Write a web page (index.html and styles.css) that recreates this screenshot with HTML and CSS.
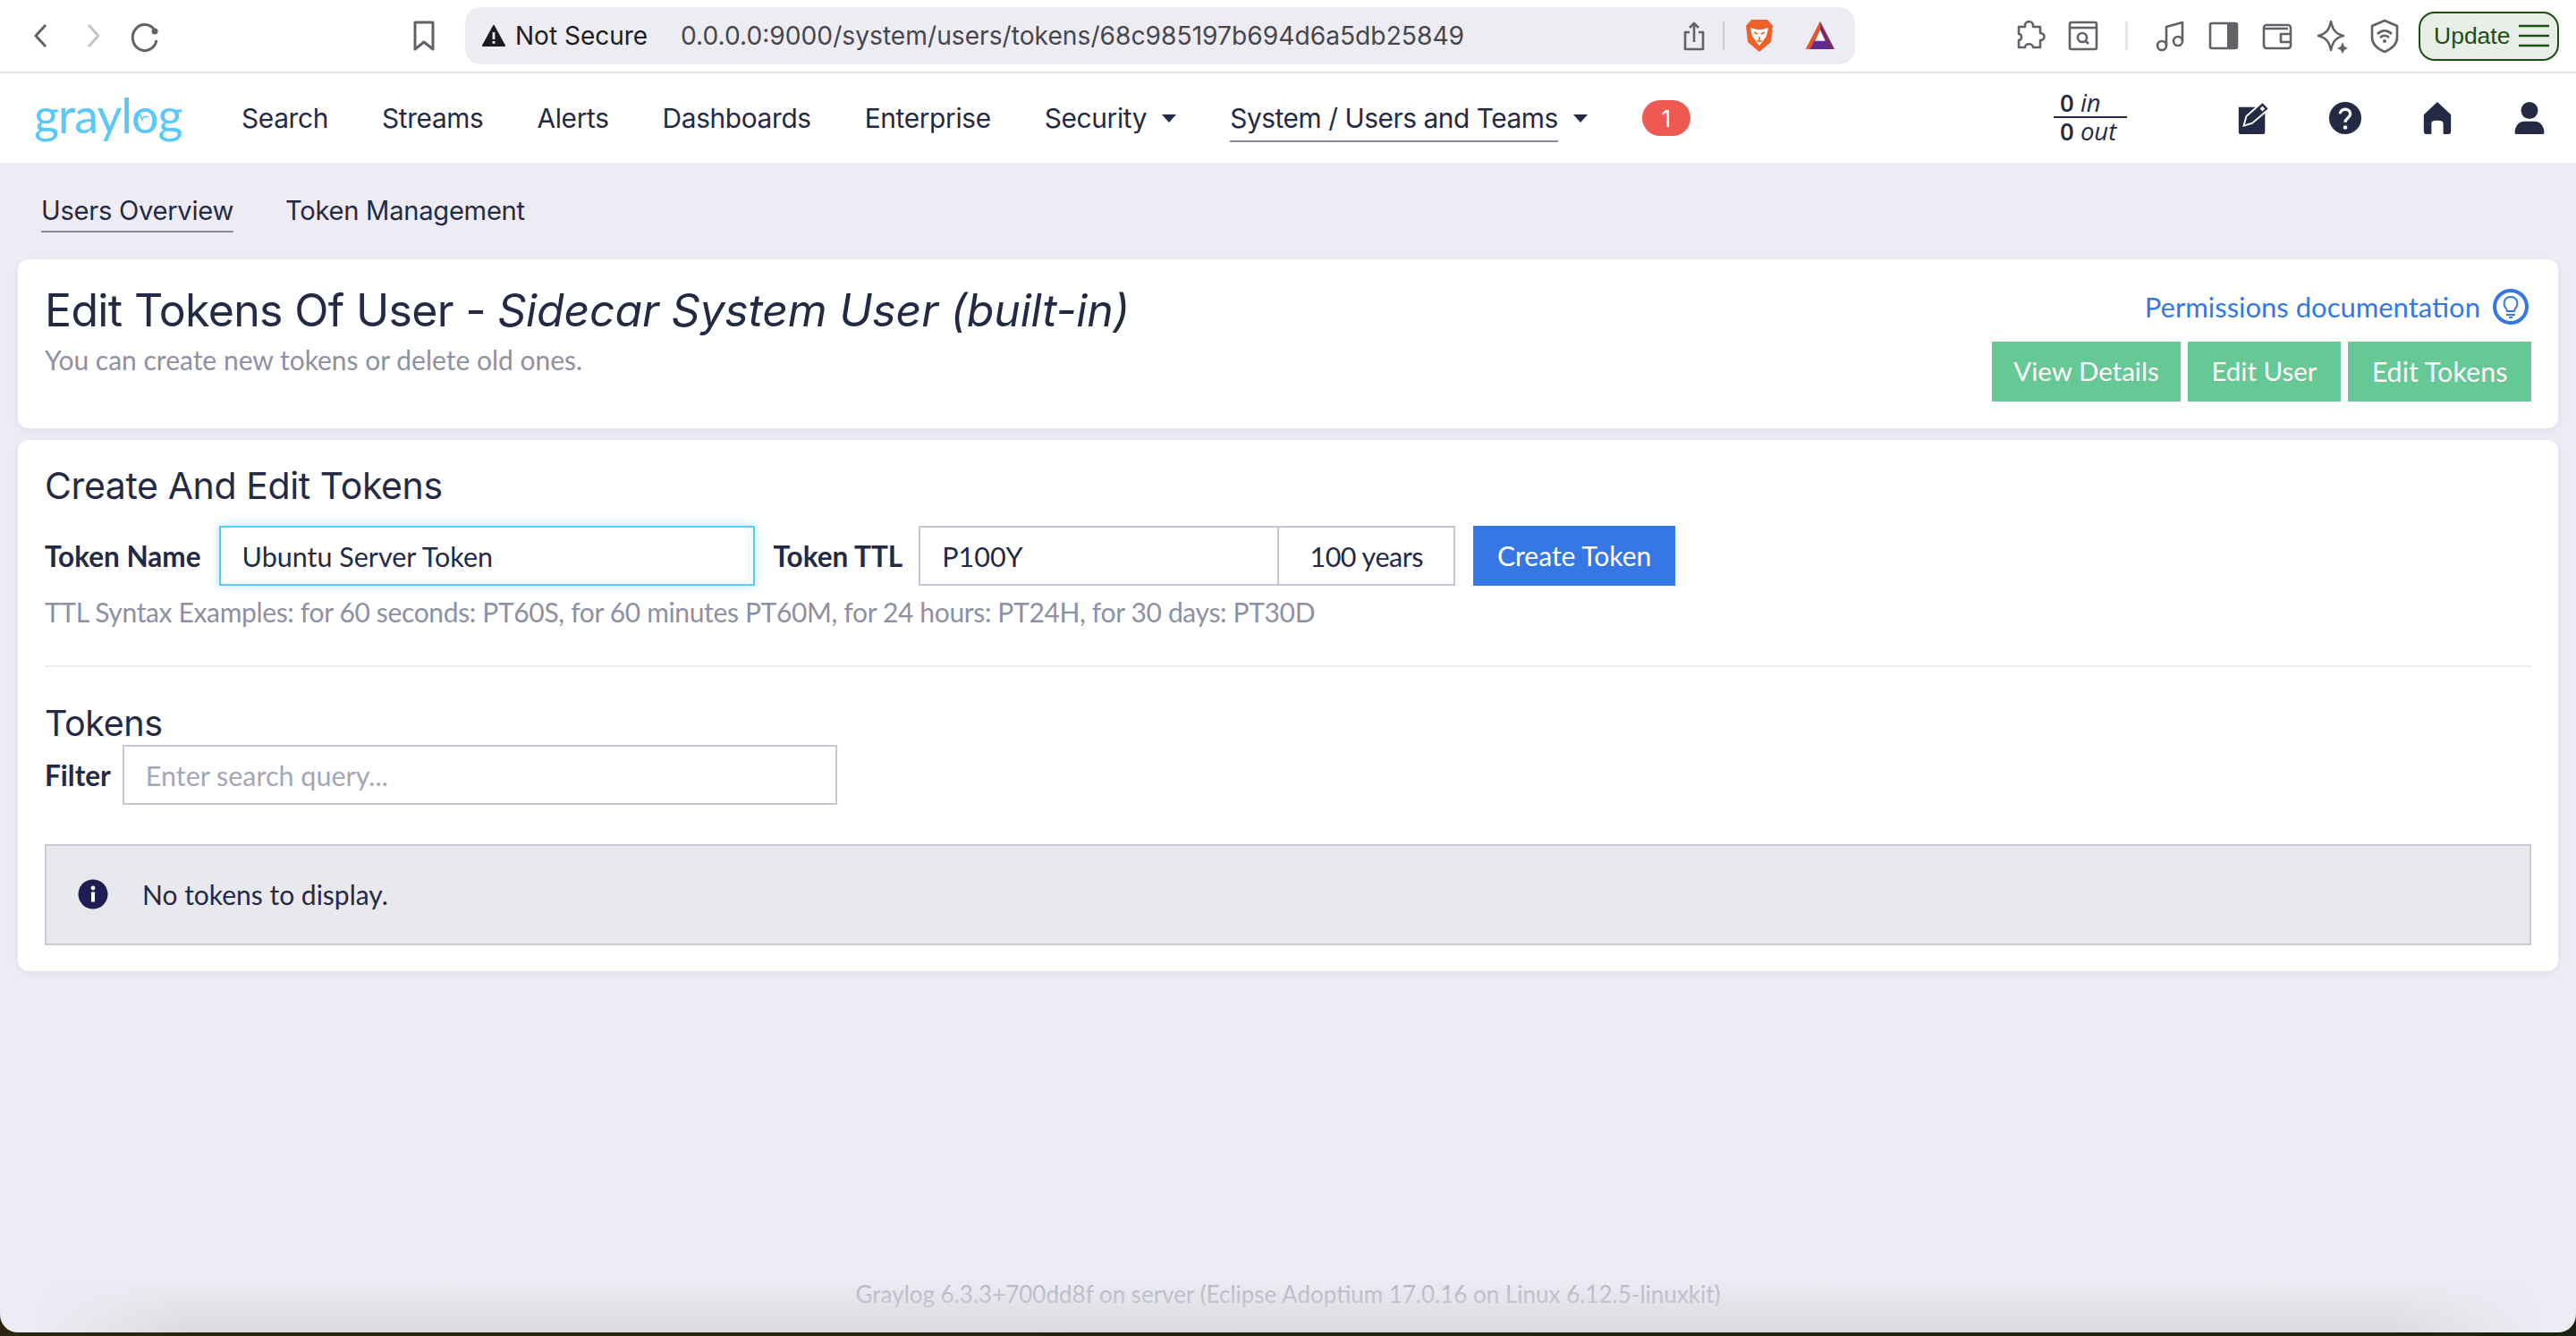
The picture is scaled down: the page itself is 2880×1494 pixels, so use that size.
FILE: index.html
```html
<html>

<head>
    <link rel="stylesheet" href="styles.css">
    <title>Graylog - Edit Tokens</title>
</head>

<body>
    <div class="window">
        <!-- browser toolbar -->
        <div class="toolbar">
            <svg class="tb-icon" viewBox="0 0 40 40"><path class="st" d="M28 8 L17 20 L28 32" transform="translate(-1 0)" /></svg>
            <svg class="tb-icon forward" viewBox="0 0 40 40"><path class="st light" d="M15 8 L26 20 L15 32" /></svg>
            <svg class="tb-icon reload" viewBox="0 0 40 40"><path class="st" d="M30 14 A13.5 14.5 0 1 0 32 25" /><circle cx="30" cy="15" r="3.5" fill="#5f6368" /></svg>
            <svg class="tb-icon bookmark" viewBox="0 0 40 40"><path class="st" d="M10 5 H30 V35 L20 27 L10 35 Z" /></svg>
            <div class="address">
                <svg class="warn" viewBox="0 0 26 26"><path d="M13 2 L25 24 H1 Z" fill="#1c1c20" stroke="#1c1c20" stroke-width="2" stroke-linejoin="round" /><rect x="11.6" y="9" width="2.8" height="8" fill="#edecf3" /><rect x="11.6" y="19" width="2.8" height="2.8" fill="#edecf3" /></svg>
                <span class="not-secure">Not Secure</span>
                <span class="url">0.0.0.0:9000/system/users/tokens/68c985197b694d6a5db25849</span>
                <svg class="share" viewBox="0 0 24 34"><path class="st thin" d="M7 13 H2 V32 H22 V13 H17 M12 24 V3 M7 8 L12 3 L17 8" /></svg>
                <span class="addr-div"></span>
                <svg class="brave" viewBox="0 0 32 38"><path d="M7 1 H25 L31 8 L29 26 L16 37 L3 26 L1 8 Z" fill="#f0602a" /><path d="M6 10 L13 12 H19 L26 10 L24 19 L20 25 L16 30 L12 25 L8 19 Z" fill="#fff" /><path d="M10 15 L14 17 M22 15 L18 17 M16 20 V25 M13 25 H19" stroke="#f0602a" stroke-width="1.6" fill="none" /></svg>
                <svg class="bat" viewBox="0 0 36 36"><path d="M18 1 L35 34 H1 Z" fill="#7d2a68" /><path d="M18 1 L1 34 H9 L18 12 Z" fill="#e9542c" /><path d="M11 24 H25 L30 34 H6 Z" fill="#5e2c8c" /><path d="M18 11 L24 24 H12 Z" fill="#fff" /></svg>
            </div>
            <svg class="tb-icon puzzle" viewBox="0 0 40 40"><path class="st thin" d="M15 8 C15 3 24 3 24 8 V10 H32 V17 C38 17 38 25 32 25 V33 H24 C24 28 15 28 15 33 H8 V25 C12 25 12 18 8 18 V10 H15 Z" /></svg>
            <svg class="tb-icon reader" viewBox="0 0 40 40"><rect class="st thin" x="5" y="5" width="30" height="30" rx="2" /><path class="st thin" d="M5 11 H35" /><circle class="st thin" cx="19" cy="22" r="5" /><path class="st thin" d="M23 26 L26 29" /></svg>
            <span class="tb-div"></span>
            <svg class="tb-icon music" viewBox="0 0 40 40"><circle class="st thin" cx="10" cy="31" r="5" /><circle class="st thin" cx="28" cy="26" r="5" /><path class="st thin" d="M15 31 V10 L33 5 V26" /></svg>
            <svg class="tb-icon sidebar" viewBox="0 0 40 40"><rect class="st thin" x="5" y="6" width="30" height="28" rx="2" /><rect x="24" y="6" width="11" height="28" fill="#5f6368" /></svg>
            <svg class="tb-icon wallet" viewBox="0 0 40 40"><rect class="st thin" x="5" y="8" width="30" height="26" rx="3" /><path class="st thin" d="M5 12 H32 M35 18 H24 V27 H35" /></svg>
            <svg class="tb-icon star" viewBox="0 0 40 40"><path class="st thin" d="M20 4 C22 14 26 18 34 20 C26 22 22 26 20 36 C18 26 14 22 6 20 C14 18 18 14 20 4 Z" /><path d="M33 27 L35 32 L39 34 L35 36 L33 40 L31 36 L27 34 L31 32 Z" fill="#5f6368" /></svg>
            <svg class="tb-icon vpn" viewBox="0 0 40 40"><path class="st thin" d="M20 3 L34 9 V22 C34 30 27 35 20 38 C13 35 6 30 6 22 V9 Z" /><path class="st thin" d="M12 18 C17 13 23 13 28 18 M15 22 C18 19 22 19 25 22" /><circle cx="20" cy="26" r="2" fill="#5f6368" /></svg>
            <div class="update">
                <span>Update</span>
                <svg class="update-menu" viewBox="0 0 34 26"><path d="M0 2 H34 M0 13 H34 M0 24 H34" stroke="#1e4d12" stroke-width="2.5" /></svg>
            </div>
        </div>

        <!-- graylog nav -->
        <nav class="navbar">
            <a class="logo">
                <span>graylog</span>
                <svg class="logo-pulse" viewBox="0 0 20 12"><path d="M1 6 H6 L8 2 L11 10 L13 6 H19" fill="none" stroke="#5ac8fa" stroke-width="1.6" /></svg>
            </a>
            <a class="nav-link">Search</a>
            <a class="nav-link">Streams</a>
            <a class="nav-link">Alerts</a>
            <a class="nav-link">Dashboards</a>
            <a class="nav-link">Enterprise</a>
            <a class="nav-link">Security<i class="caret"></i></a>
            <a class="nav-link active"><span>System / Users and Teams</span><i class="caret"></i></a>
            <span class="badge">1</span>
            <div class="throughput">
                <div class="tp-row tp-in"><b>0</b> <em>in</em></div>
                <div class="tp-row"><b>0</b> <em>out</em></div>
            </div>
            <svg class="nav-icon edit" viewBox="0 0 40 40"><path d="M3 7 H23 L12 18 L9 28 L19 26 L34 12 V36 C34 38 33 39 31 39 H5 C4 39 3 38 3 36 Z" fill="#252a44" /><path d="M31 1 L39 9 L19 26 L9 29 L12 18 Z" fill="#252a44" stroke="#fff" stroke-width="2" /><path d="M31 6 L34 9 L31 12 L28 9 Z" fill="#fff" /></svg>
            <svg class="nav-icon help" viewBox="0 0 40 40"><circle cx="20" cy="20" r="19" fill="#252a44" /><path d="M14 15 C14 8 26 8 26 15 C26 20 20 20 20 25" fill="none" stroke="#fff" stroke-width="3.6" /><circle cx="20" cy="31" r="2.4" fill="#fff" /></svg>
            <svg class="nav-icon home" viewBox="0 0 40 40"><path d="M20 1 L36 16 V35 C36 38 35 39 33 39 H27 V27 C27 24 25 23 20 23 C15 23 13 24 13 27 V39 H7 C5 39 4 38 4 35 V16 Z" fill="#252a44" /></svg>
            <svg class="nav-icon user" viewBox="0 0 40 40"><circle cx="20" cy="11" r="10" fill="#252a44" /><path d="M4 39 C1 39 3 24 14 24 H26 C37 24 39 39 36 39 Z" fill="#252a44" /></svg>
        </nav>

        <!-- page -->
        <main class="content">
            <div class="subnav">
                <a class="subnav-link active">Users Overview</a>
                <a class="subnav-link">Token Management</a>
            </div>

            <section class="card header-card">
                <div class="header-left">
                    <h1>Edit Tokens Of User - <em>Sidecar System User (built-in)</em></h1>
                    <p class="muted">You can create new tokens or delete old ones.</p>
                </div>
                <div class="header-right">
                    <a class="doc-link">Permissions documentation
                        <svg class="bulb" viewBox="0 0 40 40"><circle cx="20" cy="20" r="18" fill="none" stroke="#3578e5" stroke-width="4" /><path d="M20 9 C12 9 11 18 15 22 L16 25 H24 L25 22 C29 18 28 9 20 9 Z M15 29 H25 M18 32 H22" fill="none" stroke="#3578e5" stroke-width="2" /></svg>
                    </a>
                    <div class="header-btns">
                        <a class="btn btn-green btn-view">View Details</a>
                        <a class="btn btn-green btn-user">Edit User</a>
                        <a class="btn btn-green btn-tokens">Edit Tokens</a>
                    </div>
                </div>
            </section>

            <section class="card token-card">
                <h2>Create And Edit Tokens</h2>
                <form class="token-form">
                    <label>Token Name</label>
                    <div class="field focused">Ubuntu Server Token</div>
                    <label class="ttl-label">Token TTL</label>
                    <div class="field ttl">P100Y</div>
                    <div class="field addon">100 years</div>
                    <a class="btn btn-blue">Create Token</a>
                </form>
                <p class="muted ttl-help">TTL Syntax Examples: for 60 seconds: PT60S, for 60 minutes PT60M, for 24 hours: PT24H, for 30 days: PT30D</p>
                <hr>
                <h2 class="tokens-title">Tokens</h2>
                <div class="filter-row">
                    <label>Filter</label>
                    <div class="field filter">Enter search query...</div>
                </div>
                <div class="alert">
                    <svg class="alert-icon" viewBox="0 0 34 34"><circle cx="17" cy="17" r="16.5" fill="#1f1d54" /><circle cx="17" cy="10" r="2.4" fill="#fff" /><rect x="15" y="14.5" width="4" height="11" fill="#fff" /></svg>
                    <span>No tokens to display.</span>
                </div>
            </section>

            <footer class="footer">Graylog 6.3.3+700dd8f on server (Eclipse Adoptium 17.0.16 on Linux 6.12.5-linuxkit)</footer>
        </main>
    </div>
</body>

</html>
```

FILE: styles.css
```css
html, body {
    margin: 0;
    height: 1494px;
    overflow: hidden;
}

body {
    background: linear-gradient(90deg, #2a2410, #1c2212);
    font-family: "Lato", sans-serif;
    color: #252a44;
}

h1, h2, p {
    margin: 0;
    font-weight: 400;
}

.window {
    height: 1490px;
    border-radius: 0 0 20px 20px;
    overflow: hidden;
    display: flex;
    flex-direction: column;
    background: #edecf5;
}

/* browser toolbar */
.toolbar {
    height: 80px;
    flex: none;
    display: flex;
    align-items: center;
    padding-left: 24px;
    background: #fff;
    border-bottom: 2px solid #e4e3ea;
}

.tb-icon {
    width: 40px;
    height: 40px;
    flex: none;
}

.st {
    fill: none;
    stroke: #5f6368;
    stroke-width: 3;
    stroke-linejoin: round;
}

.st.thin {
    stroke-width: 2.6;
}

.st.light {
    stroke: #c4c5c8;
}

.forward { margin-left: 20px; }
.reload { margin-left: 19px; }
.bookmark { margin-left: 271px; }

.address {
    width: 1554px;
    height: 64px;
    margin-left: 26px;
    flex: none;
    display: flex;
    align-items: center;
    border-radius: 18px;
    background: #edecf3;
    font-family: "Inter", sans-serif;
    color: #1c1c20;
}

.warn {
    width: 26px;
    height: 26px;
    margin-left: 19px;
}

.not-secure {
    margin-left: 11px;
    width: 147px;
    white-space: nowrap;
    font-size: 28px;
}

.url {
    margin-left: 38px;
    width: 876px;
    white-space: nowrap;
    color: #46464c;
    font-size: 28.2px;
}

.share {
    width: 24px;
    height: 34px;
    margin-left: 245px;
}

.addr-div {
    width: 2px;
    height: 32px;
    margin-left: 20px;
    background: #c9c9ce;
}

.brave {
    width: 32px;
    height: 38px;
    margin-left: 23px;
}

.bat {
    width: 36px;
    height: 34px;
    margin-left: 34px;
}

.puzzle { margin-left: 175px; }
.reader { margin-left: 20px; }

.tb-div {
    width: 3px;
    height: 32px;
    margin-left: 27px;
    background: #e4e3ea;
}

.music { margin-left: 28px; }
.sidebar { margin-left: 19px; }
.wallet { margin-left: 20px; }
.star { margin-left: 20px; }
.vpn { margin-left: 20px; }

.update {
    width: 157px;
    height: 55px;
    margin-left: 18px;
    box-sizing: border-box;
    display: flex;
    align-items: center;
    justify-content: space-between;
    padding: 0 9px 0 15px;
    border: 2px solid #1e4d12;
    border-radius: 18px;
    background: #e9eee8;
    font-family: "Liberation Sans", sans-serif;
    font-size: 26.5px;
    color: #1e4d12;
}

.update-menu {
    width: 34px;
    height: 26px;
}

/* graylog navbar */
.navbar {
    height: 100px;
    flex: none;
    display: flex;
    align-items: center;
    padding-right: 33px;
    background: #fff;
    font-family: "Inter", sans-serif;
    font-size: 29.85px;
    letter-spacing: -0.35px;
}

.logo {
    position: relative;
    width: 202px;
    padding-left: 38px;
    padding-bottom: 6px;
    box-sizing: border-box;
    margin-right: 38px;
    font-family: "Lato", sans-serif;
    font-weight: 400;
    font-size: 54px;
    letter-spacing: -1px;
    line-height: 60px;
    color: #5ac8fa;
}

.logo-pulse {
    position: absolute;
    left: 149px;
    top: 26px;
    width: 18px;
    height: 11px;
}

.nav-link {
    display: flex;
    align-items: center;
    padding: 0 30px;
    white-space: nowrap;
}

.nav-link.active {
    padding-right: 0;
}

.nav-link.active span {
    padding: 9px 0 7px;
    line-height: 36px;
    letter-spacing: -0.45px;
    border-bottom: 2px solid #8a8c9c;
}

.caret {
    display: inline-block;
    margin-left: 17px;
    border-top: 9px solid #252a44;
    border-left: 8px solid transparent;
    border-right: 8px solid transparent;
}

.badge {
    width: 54px;
    height: 40px;
    margin-left: 61px;
    display: flex;
    align-items: center;
    justify-content: center;
    border-radius: 20px;
    background: #ee5a52;
    color: #fff;
    font-size: 26px;
}

.throughput {
    width: 82px;
    margin-left: auto;
    margin-top: -3px;
    font-family: "Open Sans", sans-serif;
    font-size: 27.5px;
    line-height: 30px;
    letter-spacing: 0;
}

.tp-row {
    padding-left: 7px;
}

.tp-row b {
    font-weight: 600;
}

.tp-in {
    border-bottom: 2px solid #252a44;
}

.nav-icon {
    width: 38px;
    height: 38px;
    flex: none;
}

.edit { margin-left: 122px; }
.help { margin-left: 65px; }
.home { margin-left: 65px; }
.user { margin-left: 65px; }

/* page */
.content {
    flex: 1;
    display: flex;
    flex-direction: column;
    position: relative;
    padding: 0 20px;
}

.content::after {
    content: "";
    position: absolute;
    left: 0;
    right: 0;
    bottom: 0;
    height: 60px;
    background: linear-gradient(180deg, rgba(217, 217, 222, 0), #d9d9dd);
    -webkit-mask-image: linear-gradient(90deg, transparent 40px, #000 220px, #000 2660px, transparent 2840px);
    mask-image: linear-gradient(90deg, transparent 40px, #000 220px, #000 2660px, transparent 2840px);
    pointer-events: none;
}

.subnav {
    height: 108px;
    box-sizing: border-box;
    display: flex;
    align-items: center;
    gap: 58px;
    padding: 0 0 1px 26px;
    font-family: "Inter", sans-serif;
    font-size: 29.2px;
    letter-spacing: -0.3px;
}

.subnav-link.active {
    padding: 6px 0 5px;
    border-bottom: 2px solid #8a8c9c;
}

.card {
    background: #fff;
    border-radius: 12px;
    box-shadow: 0 2px 8px rgba(60, 60, 100, 0.08);
}

.header-card {
    height: 189px;
    display: flex;
    justify-content: space-between;
    padding: 0 30px;
}

h1 {
    margin-top: 24px;
    font-family: "Inter", sans-serif;
    font-size: 50px;
    line-height: 66px;
    letter-spacing: -0.65px;
    white-space: nowrap;
}

h1 em {
    letter-spacing: -0.18px;
}

.muted {
    color: #8e90a3;
    font-size: 30px;
    line-height: 38px;
}

.header-left .muted {
    margin-top: 3px;
}

.header-right {
    display: flex;
    flex-direction: column;
    align-items: flex-end;
}

.doc-link {
    display: flex;
    align-items: center;
    gap: 14px;
    height: 40px;
    margin-top: 33px;
    margin-right: 3px;
    color: #3578e5;
    font-size: 31px;
}

.bulb {
    width: 40px;
    height: 40px;
}

.header-btns {
    display: flex;
    gap: 8px;
    margin-top: 19px;
}

.btn {
    height: 67px;
    display: flex;
    align-items: center;
    justify-content: center;
    box-sizing: border-box;
    padding: 0 0 2px;
    color: #fff;
    font-size: 29.5px;
    white-space: nowrap;
}

.btn-green {
    background: #66c894;
}

.btn-view { width: 211px; }
.btn-user { width: 171px; }
.btn-tokens { width: 205px; font-size: 30.5px; }

.btn-blue {
    width: 226px;
    margin-left: 20px;
    background: #3578e5;
    font-size: 30px;
}

.token-card {
    height: 594px;
    margin-top: 13px;
    padding: 0 30px;
}

h2 {
    font-family: "Inter", sans-serif;
    font-size: 41px;
    letter-spacing: -0.4px;
    line-height: 56px;
}

.token-card h2:first-child {
    margin-top: 23px;
}

.token-form {
    display: flex;
    align-items: center;
    margin: 17px 0 0;
}

label {
    font-weight: 700;
    font-size: 31.5px;
    white-space: nowrap;
}

.field {
    height: 67px;
    box-sizing: border-box;
    display: flex;
    align-items: center;
    padding: 0 24px;
    background: #fff;
    border: 2px solid #c5c8db;
    font-size: 30.5px;
    white-space: nowrap;
}

.focused {
    width: 599px;
    margin-left: 20px;
    border-color: #5ac8fa;
    box-shadow: 0 0 10px rgba(90, 200, 250, 0.5);
}

.ttl-label {
    margin-left: 21px;
}

.ttl {
    width: 401px;
    margin-left: 18px;
    border-right-width: 0;
}

.addon {
    width: 199px;
    padding: 0;
    justify-content: center;
    letter-spacing: -0.5px;
}

.ttl-help {
    margin-top: 10px;
    letter-spacing: -0.35px;
}

hr {
    height: 2px;
    margin: 41px 0 0;
    border: 0;
    background: #edecf5;
}

.tokens-title {
    margin-top: 36px;
    font-size: 39.5px;
    line-height: 54px;
}

.filter-row {
    display: flex;
    align-items: center;
    gap: 13px;
    margin-top: -3px;
}

.filter {
    width: 799px;
    color: #a4a6b5;
}

.alert {
    height: 113px;
    box-sizing: border-box;
    margin-top: 44px;
    display: flex;
    align-items: center;
    gap: 38px;
    padding: 0 0 2px 35px;
    background: #e8e8ed;
    border: 2px solid #c8c9d9;
    font-size: 30px;
}

.alert-icon {
    width: 34px;
    height: 34px;
}

.footer {
    margin-top: auto;
    margin-bottom: 28px;
    text-align: center;
    color: #b4b5c2;
    font-size: 26px;
    line-height: 30px;
}
```
